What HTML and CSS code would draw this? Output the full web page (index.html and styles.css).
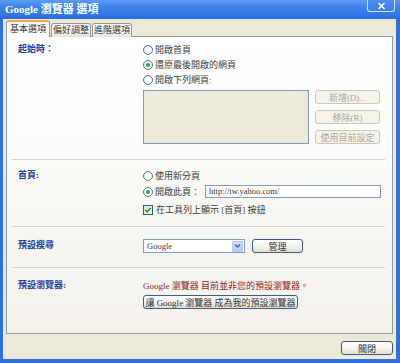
FILE: index.html
```html
<!DOCTYPE html>
<html>
<head>
<meta charset="utf-8">
<link rel="stylesheet" href="styles.css">
</head>
<body>
<div class="window">
  <div class="titlebar">
    <span class="title">Google 瀏覽器 選項</span>
    <span class="close"><svg width="9" height="8" viewBox="0 0 9 8"><path d="M1.5 1 L7.5 7 M7.5 1 L1.5 7" stroke="#fff" stroke-width="1.6"/></svg></span>
  </div>
  <div class="frame">
    <div class="tabs">
      <div class="tab active">基本選項</div>
      <div class="tab">偏好調整</div>
      <div class="tab">進階選項</div>
    </div>
    <div class="panel">
      <section class="sec s1">
        <div class="label">起始時：</div>
        <div class="controls">
          <div class="row"><span class="radio"></span><span>開啟首頁</span></div>
          <div class="row"><span class="radio checked"></span><span>還原最後開啟的網頁</span></div>
          <div class="row"><span class="radio"></span><span>開啟下列網頁:</span></div>
          <div class="listrow">
            <div class="listbox"></div>
            <div class="sidebtns">
              <div class="btn disabled">新增(D)...</div>
              <div class="btn disabled">移除(R)</div>
              <div class="btn disabled">使用目前設定</div>
            </div>
          </div>
        </div>
      </section>
      <section class="sec s2">
        <div class="label">首頁:</div>
        <div class="controls">
          <div class="row"><span class="radio"></span><span>使用新分頁</span></div>
          <div class="row r17"><span class="radio checked"></span><span class="openthis">開啟此頁：</span><span class="input">http://tw.yahoo.com/</span></div>
          <div class="row cbrow"><span class="checkbox"><svg width="8" height="8" viewBox="0 0 8 8"><path d="M1.3 3.8 L3.2 5.8 L6.8 1.8" fill="none" stroke="#21a121" stroke-width="1.6"/></svg></span><span>在工具列上顯示 [首頁] 按鈕</span></div>
        </div>
      </section>
      <section class="sec s3">
        <div class="label">預設搜尋</div>
        <div class="controls">
          <div class="selrow">
            <div class="select"><span class="selval">Google</span><span class="arrow"><svg width="9" height="8" viewBox="0 0 9 8"><path d="M2 2.5 L4.5 5 L7 2.5" fill="none" stroke="#4d6185" stroke-width="1.5"/></svg></span></div>
            <div class="btn manage">管理</div>
          </div>
        </div>
      </section>
      <section class="sec s4">
        <div class="label">預設瀏覽器:</div>
        <div class="controls">
          <div class="row warn">Google 瀏覽器 目前並非您的預設瀏覽器。</div>
          <div class="btn makedefault">讓 Google 瀏覽器 成為我的預設瀏覽器</div>
        </div>
      </section>
    </div>
    <div class="footer">
      <div class="btn closebtn">關閉</div>
    </div>
  </div>
</div>
</body>
</html>
```

FILE: styles.css
```css
* { box-sizing: border-box; }
html, body { margin: 0; padding: 0; }
body {
  width: 400px;
  height: 363px;
  overflow: hidden;
  font-family: "Liberation Serif", "Noto Sans CJK TC", serif;
  font-size: 9px;
  color: #3c3c3c;
  background: #ece9d8;
}
.window {
  width: 400px;
  height: 363px;
  display: flex;
  flex-direction: column;
}
.titlebar {
  height: 19px;
  flex: none;
  display: flex;
  justify-content: space-between;
  align-items: flex-start;
  padding: 0 5px;
  background: linear-gradient(#5e9cf1, #3f84ea 35%, #3277e4 75%, #2c6bdb);
}
.title {
  color: #fff;
  font-weight: bold;
  font-size: 11px;
  line-height: 18px;
}
.close {
  width: 28px;
  height: 12px;
  border: 1px solid #d6e4fb;
  border-top: none;
  border-radius: 0 0 3px 3px;
  background: linear-gradient(#4e8ef0, #3b7be6);
  display: flex;
  align-items: center;
  justify-content: center;
}
.frame {
  flex: 1;
  display: flex;
  flex-direction: column;
  border: solid #3170dc;
  border-width: 0 4px 4px 3px;
  padding: 2px 3px 0 3px;
  background: #ece9d8;
}
.tabs {
  display: flex;
  align-items: flex-end;
  height: 16px;
  flex: none;
  position: relative;
  z-index: 1;
  margin-bottom: -1px;
}
.tab {
  height: 14px;
  width: 40px;
  border: 1px solid #919b9c;
  border-bottom: none;
  border-radius: 3px 3px 0 0;
  background: linear-gradient(#ffffff, #f5f4ee 60%, #e8e6da);
  line-height: 13px;
  text-align: center;
  color: #333;
  margin-left: 1px;
}
.tab.active {
  height: 17px;
  width: 44px;
  margin-left: 0;
  background: #fcfcfe;
  border-top: 2px solid #f4a53c;
  line-height: 14px;
}
.panel {
  flex: none;
  height: 298px;
  border: 1px solid #919b9c;
  background: linear-gradient(#ffffff, #fdfdfc 30%, #f7f5f0 70%, #f4f2eb);
  padding: 0 7px 0 5px;
}
.sec {
  display: grid;
  grid-template-columns: 125px 1fr;
  padding-left: 6px;
  border-bottom: 1px solid #d5d2c6;
}
.label {
  color: #1f3fa2;
  font-weight: bold;
  line-height: 15px;
  font-size: 9px;
}
.controls {
  display: flex;
  flex-direction: column;
}
.row {
  display: flex;
  align-items: center;
  height: 15px;
  white-space: nowrap;
}
.radio {
  width: 10px;
  height: 10px;
  flex: none;
  border-radius: 50%;
  border: 1px solid #4a76a0;
  background: radial-gradient(circle at 60% 60%, #ffffff 30%, #e6e4dc);
  margin-right: 2px;
  display: flex;
  align-items: center;
  justify-content: center;
}
.radio.checked::after {
  content: "";
  width: 4px;
  height: 4px;
  border-radius: 50%;
  background: #2aa52a;
}
.s1 { padding-top: 5px; padding-bottom: 15px; }
.listrow {
  display: flex;
  margin-top: 3px;
  gap: 6px;
}
.listbox {
  width: 166px;
  height: 54px;
  border: 1px solid #7f9db9;
  background: #ece9d8;
}
.sidebtns {
  display: flex;
  flex-direction: column;
  justify-content: space-between;
  width: 65px;
}
.btn {
  height: 14px;
  border: 1px solid #3e5a85;
  border-radius: 3px;
  background: linear-gradient(#ffffff, #f4f3ee 55%, #e0ddd0);
  display: flex;
  align-items: center;
  justify-content: center;
  color: #333;
  white-space: nowrap;
}
.btn.disabled {
  border-color: #c9c7ba;
  color: #aca899;
  background: #f5f4ea;
}
.s2 { padding-top: 8px; padding-bottom: 9px; }
.r17 { height: 17px; }
.openthis { width: 50px; }
.input {
  width: 176px;
  height: 13px;
  border: 1px solid #7f9db9;
  background: #fff;
  padding-left: 3px;
  line-height: 11px;
  font-size: 8.5px;
  color: #333;
}
.cbrow { margin-top: 2px; }
.checkbox {
  width: 10px;
  height: 10px;
  flex: none;
  border: 1px solid #2a5d8c;
  background: linear-gradient(135deg, #e0ded5, #fbfbf8);
  display: flex;
  align-items: center;
  justify-content: center;
  margin-right: 3px;
}
.s3 { padding-top: 12px; padding-bottom: 14px; }
.s3 .label { line-height: 12px; }
.selrow {
  display: flex;
  gap: 7px;
  height: 14px;
}
.select {
  width: 102px;
  height: 14px;
  border: 1px solid #7f9db9;
  background: #fff;
  display: flex;
  align-items: center;
  justify-content: space-between;
  padding: 0 1px 0 3px;
}
.selval { font-size: 8.5px; }
.arrow {
  width: 11px;
  height: 11px;
  border-radius: 1px;
  background: linear-gradient(#d4e1fc, #b6cbf7);
  border: 1px solid #b4c8f4;
  display: flex;
  align-items: center;
  justify-content: center;
}
.manage { width: 51px; }
.s4 { padding-top: 10px; border-bottom: none; }
.warn { color: #8e2424; }
.makedefault { width: 155px; margin-top: 2px; }
.footer {
  display: flex;
  justify-content: flex-end;
  margin-top: 7px;
}
.closebtn { width: 52px; }
```
